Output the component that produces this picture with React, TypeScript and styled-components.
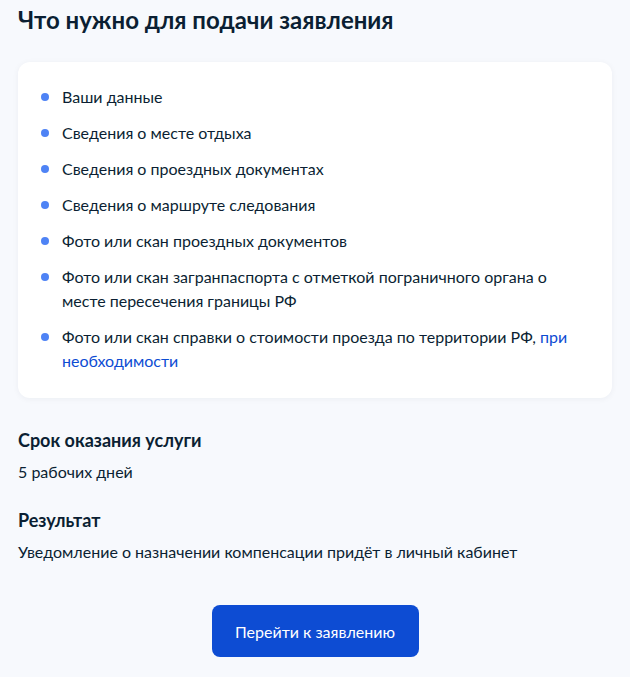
import React from "react";
import styled, { createGlobalStyle } from "styled-components";

const GlobalStyle = createGlobalStyle`
  body {
    margin: 0;
    background: #f7f9fd;
    font-family: Lato, "Noto Sans", sans-serif;
    color: #0b1f33;
  }
`;

const Page = styled.div`
  padding: 6px 18px 20px 18px;
  display: flex;
  flex-direction: column;
`;

const Title = styled.h2`
  margin: 0;
  font-size: 24px;
  line-height: 28px;
  font-weight: 700;
`;

const Card = styled.div`
  margin-top: 28px;
  background: #ffffff;
  border-radius: 12px;
  padding: 23px 24px 25px 23px;
  box-shadow: 0 1px 6px rgba(11, 31, 51, 0.05);
`;

const List = styled.ul`
  list-style: none;
  margin: 0;
  padding: 0;
  display: flex;
  flex-direction: column;
  gap: 12px;
`;

const Item = styled.li`
  position: relative;
  padding-left: 21px;
  font-size: 16px;
  line-height: 24px;

  &::before {
    content: "";
    position: absolute;
    left: 0;
    top: 8px;
    width: 8px;
    height: 8px;
    border-radius: 50%;
    background: #4e83f5;
  }
`;

const Link = styled.a`
  color: #0d4cd3;
  text-decoration: none;
`;

const Section = styled.section<{ $top: number }>`
  margin-top: ${(p) => p.$top}px;
  display: flex;
  flex-direction: column;
  gap: 8px;
`;

const Heading = styled.h3`
  margin: 0;
  font-size: 18px;
  line-height: 24px;
  font-weight: 700;
`;

const Text = styled.p`
  margin: 0;
  font-size: 16px;
  line-height: 24px;
`;

const Actions = styled.div`
  margin-top: 41px;
  display: flex;
  justify-content: center;
`;

const Button = styled.button`
  width: 207px;
  height: 52px;
  border: none;
  border-radius: 8px;
  background: #0d4cd3;
  color: #ffffff;
  font-family: Lato, "Noto Sans", sans-serif;
  font-size: 16px;
  cursor: pointer;
`;

const items = [
  "Ваши данные",
  "Сведения о месте отдыха",
  "Сведения о проездных документах",
  "Сведения о маршруте следования",
  "Фото или скан проездных документов",
  "Фото или скан загранпаспорта с отметкой пограничного органа о месте пересечения границы РФ",
];

export default function App() {
  return (
    <>
      <GlobalStyle />
      <Page>
        <Title>Что нужно для подачи заявления</Title>
        <Card>
          <List>
            {items.map((t) => (
              <Item key={t}>{t}</Item>
            ))}
            <Item>
              Фото или скан справки о стоимости проезда по территории РФ,{" "}
              <Link href="#">при необходимости</Link>
            </Item>
          </List>
        </Card>
        <Section $top={30}>
          <Heading>Срок оказания услуги</Heading>
          <Text>5 рабочих дней</Text>
        </Section>
        <Section $top={24}>
          <Heading>Результат</Heading>
          <Text>Уведомление о назначении компенсации придёт в личный кабинет</Text>
        </Section>
        <Actions>
          <Button type="button">Перейти к заявлению</Button>
        </Actions>
      </Page>
    </>
  );
}
